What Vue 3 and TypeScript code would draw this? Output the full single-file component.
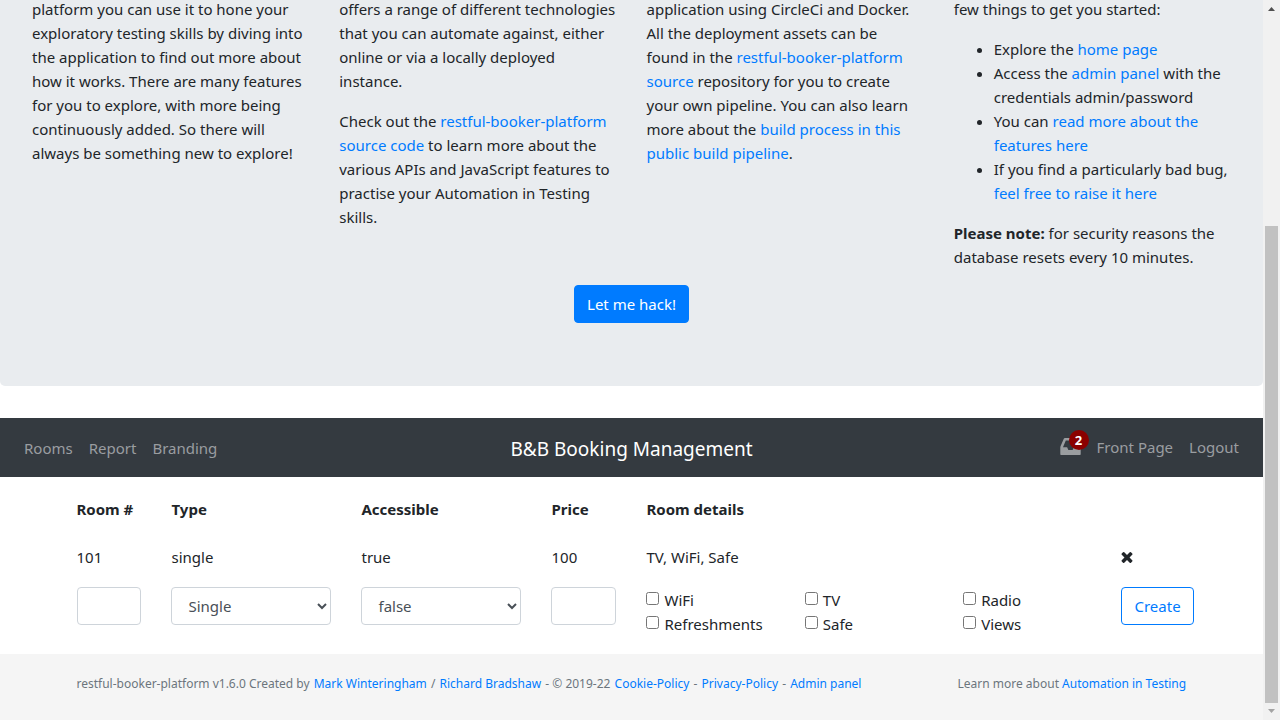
<script setup lang="ts">
import { ref } from 'vue'

interface Room {
  id: number
  type: string
  accessible: string
  price: number
  details: string
}

const rooms = ref<Room[]>([
  { id: 101, type: 'single', accessible: 'true', price: 100, details: 'TV, WiFi, Safe' },
])
const roomTypes = ['Single', 'Twin', 'Double', 'Family', 'Suite']
const features = ['WiFi', 'TV', 'Radio', 'Refreshments', 'Safe', 'Views']

const newNumber = ref('')
const newType = ref('Single')
const newAccessible = ref('false')
const newPrice = ref('')
const chosen = ref<string[]>([])
</script>

<template>
  <div class="window">
    <div class="page">
      <section class="hero">
        <div class="hero-columns">
          <div class="hero-col">
            <p>
              platform you can use it to hone your<br />
              exploratory testing skills by diving into<br />
              the application to find out more about<br />
              how it works. There are many features<br />
              for you to explore, with more being<br />
              continuously added. So there will<br />
              always be something new to explore!
            </p>
          </div>
          <div class="hero-col">
            <p>
              offers a range of different technologies<br />
              that you can automate against, either<br />
              online or via a locally deployed<br />
              instance.
            </p>
            <p>
              Check out the <a href="#source">restful-booker-platform<br />
              source code</a> to learn more about the<br />
              various APIs and JavaScript features to<br />
              practise your Automation in Testing<br />
              skills.
            </p>
          </div>
          <div class="hero-col">
            <p>
              application using CircleCi and Docker.<br />
              All the deployment assets can be<br />
              found in the <a href="#source">restful-booker-platform<br />
              source</a> repository for you to create<br />
              your own pipeline. You can also learn<br />
              more about the <a href="#pipeline">build process in this<br />
              public build pipeline</a>.
            </p>
          </div>
          <div class="hero-col">
            <p>few things to get you started:</p>
            <ul>
              <li>Explore the <a href="#home">home page</a></li>
              <li>Access the <a href="#admin">admin panel</a> with the<br />credentials admin/password</li>
              <li>You can <a href="#features">read more about the<br />features here</a></li>
              <li>If you find a particularly bad bug,<br /><a href="#issues">feel free to raise it here</a></li>
            </ul>
            <p><strong>Please note:</strong> for security reasons the<br />database resets every 10 minutes.</p>
          </div>
        </div>
        <div class="hero-action">
          <button type="button" class="btn btn-primary">Let me hack!</button>
        </div>
      </section>

      <nav class="navbar">
        <div class="nav-group">
          <a href="#rooms">Rooms</a>
          <a href="#report">Report</a>
          <a href="#branding">Branding</a>
        </div>
        <h1>B&amp;B Booking Management</h1>
        <div class="nav-group nav-right">
          <a href="#messages" class="inbox" aria-label="Messages">
            <svg viewBox="0 128 1536 1280" width="21" height="17" aria-hidden="true">
              <path fill="currentColor" d="M1023 832h316q-1-3-2.500-8.500t-2.500-7.500l-212-496H414L202 816q-1 3-2.500 8.500T197 832h316l95 192h320zm513 30v482q0 26-19 45t-45 19H64q-26 0-45-19t-19-45V862q0-62 25-123l238-552q10-25 36.500-42t52.500-17h832q26 0 52.500 17t36.500 42l238 552q25 61 25 123z" />
            </svg>
            <span class="badge">2</span>
          </a>
          <a href="#front">Front Page</a>
          <a href="#logout">Logout</a>
        </div>
      </nav>

      <main class="container">
        <table class="rooms">
          <colgroup>
            <col class="c1" /><col class="c2" /><col class="c2" /><col class="c1" /><col class="c5" /><col class="c1" />
          </colgroup>
          <thead>
            <tr>
              <th>Room #</th>
              <th>Type</th>
              <th>Accessible</th>
              <th>Price</th>
              <th>Room details</th>
              <td></td>
            </tr>
          </thead>
          <tbody>
            <tr v-for="room in rooms" :key="room.id" class="room">
              <td>{{ room.id }}</td>
              <td>{{ room.type }}</td>
              <td>{{ room.accessible }}</td>
              <td>{{ room.price }}</td>
              <td>{{ room.details }}</td>
              <td>
                <button type="button" class="remove" aria-label="Delete room">
                  <svg viewBox="302 366 1188 1188" width="12" height="11" aria-hidden="true">
                    <path fill="currentColor" d="M1490 1322q0 40-28 68l-136 136q-28 28-68 28t-68-28l-294-294-294 294q-28 28-68 28t-68-28l-136-136q-28-28-28-68t28-68l294-294-294-294q-28-28-28-68t28-68l136-136q28-28 68-28t68 28l294 294 294-294q28-28 68-28t68 28l136 136q28 28 28 68t-28 68l-294 294 294 294q28 28 28 68z" />
                  </svg>
                </button>
              </td>
            </tr>
            <tr class="new-room">
              <td><input v-model="newNumber" class="control" type="text" aria-label="Room number" /></td>
              <td>
                <select v-model="newType" class="control" aria-label="Type">
                  <option v-for="t in roomTypes" :key="t">{{ t }}</option>
                </select>
              </td>
              <td>
                <select v-model="newAccessible" class="control" aria-label="Accessible">
                  <option>false</option>
                  <option>true</option>
                </select>
              </td>
              <td><input v-model="newPrice" class="control" type="text" aria-label="Price" /></td>
              <td>
                <div class="features">
                  <label v-for="f in features" :key="f">
                    <input v-model="chosen" type="checkbox" :value="f" /><span>{{ f }}</span>
                  </label>
                </div>
              </td>
              <td><button type="button" class="btn btn-outline">Create</button></td>
            </tr>
          </tbody>
        </table>
      </main>

      <footer class="footer">
        <div class="container footer-row">
          <p class="credits">
            restful-booker-platform v1.6.0 Created by <a href="#mark">Mark Winteringham</a> /
            <a href="#richard">Richard Bradshaw</a> - © 2019-22 <a href="#cookie">Cookie-Policy</a> -
            <a href="#privacy">Privacy-Policy</a> - <a href="#admin">Admin panel</a>
          </p>
          <p>Learn more about <a href="#ait">Automation in Testing</a></p>
        </div>
      </footer>
    </div>

    <div class="scrollbar" aria-hidden="true">
      <svg viewBox="0 0 7 4" width="7" height="4"><path fill="#505050" d="M0 4 3.500 0 7 4z" /></svg>
      <div class="track"><div class="thumb"></div></div>
      <svg viewBox="0 0 7 4" width="7" height="4"><path fill="#a3a3a3" d="M0 0h7L3.500 4z" /></svg>
    </div>
  </div>
</template>

<style>
body {
  margin: 0;
  background: #fff;
}
</style>

<style scoped>
.window {
  display: flex;
  height: 100vh;
  overflow: hidden;
  font: 15px/24px "Segoe UI", "Noto Sans", "Open Sans", sans-serif;
  color: #212529;
}
.window *,
.window {
  box-sizing: border-box;
}
.page {
  flex: 1;
  min-width: 0;
  display: flex;
  flex-direction: column;
}
a {
  color: #007bff;
  text-decoration: none;
}
p,
ul {
  margin: 0 0 16px;
}
ul {
  padding-left: 40px;
}
.hero {
  overflow: hidden;
  padding: 0 17px 63px;
  background: #e9ecef;
  border-radius: 0 0 5px 5px;
}
.hero-columns {
  display: grid;
  grid-template-columns: repeat(4, 1fr);
  margin-top: -3px;
}
.hero-col {
  padding: 0 15px;
  min-width: 0;
  white-space: nowrap;
}
.hero-action {
  display: flex;
  justify-content: center;
}
.btn {
  height: 38px;
  padding: 0 12px;
  border: 1px solid #007bff;
  border-radius: 4px;
  font: inherit;
  white-space: nowrap;
}
.btn-primary {
  background: #007bff;
  color: #fff;
}
.btn-outline {
  background: transparent;
  color: #007bff;
}
.navbar {
  display: grid;
  grid-template-columns: 1fr auto 1fr;
  align-items: center;
  height: 59px;
  margin-top: 32px;
  padding: 0 24px;
  background: #343a40;
}
.navbar h1 {
  margin: 0;
  padding-top: 2px;
  font-size: 19px;
  font-weight: 400;
  color: #fff;
}
.nav-group {
  display: flex;
  gap: 16px;
}
.nav-group a {
  color: #9a9da0;
}
.nav-right {
  justify-content: flex-end;
  padding-bottom: 2px;
}
.inbox {
  position: relative;
  display: flex;
  align-items: center;
}
.badge {
  position: absolute;
  top: -5px;
  left: 9px;
  width: 20px;
  height: 20px;
  border-radius: 50%;
  background: #8b0000;
  color: #fff;
  font-size: 13px;
  font-weight: 700;
  line-height: 20px;
  text-align: center;
}
.container {
  width: 100%;
  max-width: 1140px;
  margin: 0 auto;
}
.rooms {
  width: 100%;
  margin-top: 20px;
  table-layout: fixed;
  border-collapse: collapse;
}
.c1 {
  width: 8.3333%;
}
.c2 {
  width: 16.6667%;
}
.c5 {
  width: 41.6667%;
}
.rooms th,
.rooms td {
  padding: 0 15px;
  text-align: left;
  vertical-align: top;
  white-space: nowrap;
}
.rooms .room td {
  padding-top: 24px;
}
.rooms .new-room td {
  padding-top: 18px;
}
.remove {
  display: flex;
  align-items: center;
  height: 24px;
  padding: 0;
  border: 0;
  background: none;
  color: #212529;
}
.control {
  display: block;
  width: 100%;
  height: 38px;
  padding: 0 12px;
  border: 1px solid #ced4da;
  border-radius: 4px;
  background: #fff;
  font: inherit;
  color: #495057;
}
.features {
  display: grid;
  grid-template-columns: repeat(3, 1fr);
  width: calc(100% + 30px);
  padding-top: 1px;
}
.features label {
  display: flex;
  align-items: center;
  gap: 5px;
  height: 24px;
}
.features input {
  margin: 0 0 3px;
}
.footer {
  flex: 1;
  margin-top: 18px;
  padding-top: 18px;
  background: #f5f5f5;
  font-size: 12px;
  color: #6c757d;
}
.footer-row {
  display: grid;
  grid-template-columns: 881px 1fr;
}
.footer-row p {
  margin: 0;
  padding-left: 15px;
  white-space: nowrap;
}
.credits a {
  margin: 0 1px;
}
.scrollbar {
  display: flex;
  flex-direction: column;
  align-items: center;
  flex: 0 0 17px;
  padding: 7px 0;
  background: #f1f1f1;
}
.track {
  flex: 1;
  display: flex;
  align-items: flex-end;
  padding: 6px 0;
}
.thumb {
  width: 13px;
  height: 69.6%;
  background: #c1c1c1;
}
</style>
